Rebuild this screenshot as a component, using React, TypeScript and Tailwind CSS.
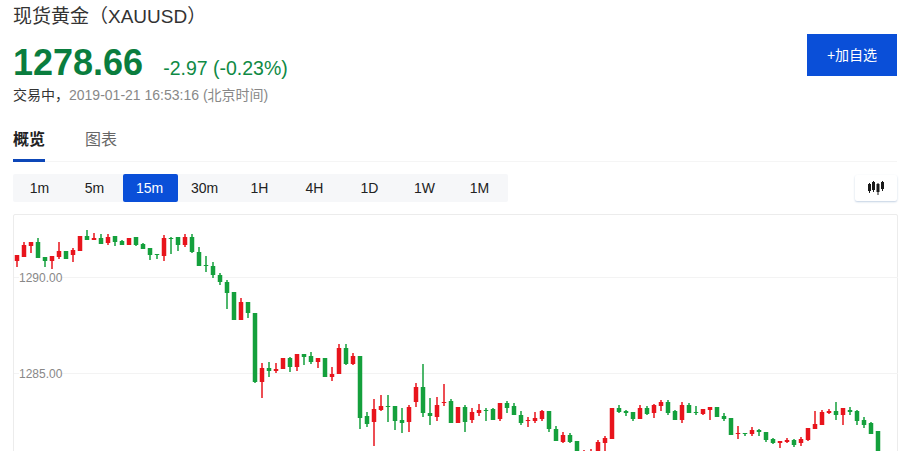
const intervals = ["1m", "5m", "15m", "30m", "1H", "4H", "1D", "1W", "1M"];

// r = red, g = green: [colour, wick top, body top, body bottom, wick bottom], one candle every 7px from x=17
type Candle = ["r" | "g", number, number, number, number];

const candles: Candle[] = [
  ["r", 255, 255, 261, 267], ["r", 242, 245, 257, 257], ["r", 242, 242, 246, 253], ["g", 238, 242, 258, 258],
  ["g", 257, 257, 261, 267], ["r", 256, 256, 261, 269], ["r", 242, 251, 257, 259], ["g", 251, 251, 259, 259],
  ["r", 248, 250, 255, 262], ["r", 236, 236, 251, 251], ["g", 230, 236, 240, 240], ["r", 233, 238, 240, 240],
  ["g", 234, 238, 244, 244], ["r", 234, 237, 243, 245], ["g", 236, 236, 242, 246], ["g", 240, 241, 245, 245],
  ["r", 238, 238, 245, 245], ["g", 237, 237, 245, 246], ["g", 243, 244, 249, 249], ["g", 248, 248, 255, 260],
  ["g", 254, 254, 255, 259], ["r", 235, 238, 256, 261], ["g", 237, 238, 239, 254], ["g", 237, 237, 245, 251],
  ["r", 234, 237, 245, 247], ["g", 234, 237, 252, 253], ["g", 247, 252, 266, 266], ["g", 256, 265, 266, 272],
  ["g", 262, 266, 275, 278], ["g", 273, 275, 282, 285], ["g", 280, 282, 293, 309], ["g", 292, 292, 320, 320],
  ["r", 298, 302, 320, 320], ["g", 302, 302, 313, 318], ["g", 313, 313, 382, 383], ["r", 363, 368, 382, 398],
  ["g", 362, 368, 371, 377], ["r", 363, 369, 371, 373], ["r", 358, 358, 369, 369], ["g", 357, 358, 367, 372],
  ["r", 354, 354, 367, 371], ["g", 354, 354, 357, 365], ["g", 352, 356, 362, 364], ["r", 358, 358, 362, 368],
  ["g", 358, 358, 377, 377], ["r", 367, 374, 377, 381], ["r", 344, 348, 374, 374], ["g", 344, 348, 364, 365],
  ["r", 353, 356, 364, 365], ["g", 356, 356, 418, 429], ["g", 412, 416, 424, 427], ["r", 399, 409, 422, 446],
  ["r", 395, 406, 410, 411], ["g", 395, 406, 407, 422], ["g", 406, 406, 421, 430], ["g", 408, 420, 423, 433],
  ["r", 405, 407, 422, 432], ["r", 383, 387, 402, 407], ["g", 364, 387, 413, 417], ["g", 398, 413, 416, 425],
  ["r", 397, 405, 417, 421], ["r", 384, 402, 403, 406], ["g", 399, 401, 423, 423], ["r", 407, 407, 423, 423],
  ["g", 405, 407, 422, 432], ["r", 408, 412, 420, 423], ["r", 404, 410, 413, 416], ["g", 408, 410, 411, 421],
  ["g", 408, 409, 420, 420], ["r", 403, 403, 419, 421], ["g", 401, 403, 408, 413], ["g", 403, 406, 415, 415],
  ["g", 411, 415, 423, 425], ["r", 417, 420, 421, 427], ["r", 412, 418, 421, 423], ["r", 410, 411, 419, 421],
  ["g", 411, 411, 429, 432], ["g", 426, 429, 441, 441], ["r", 432, 435, 442, 443], ["g", 433, 435, 442, 443],
  ["g", 441, 441, 455, 455], ["r", 450, 452, 455, 455], ["r", 449, 451, 455, 455], ["r", 440, 442, 455, 455],
  ["r", 436, 438, 443, 451], ["r", 408, 408, 439, 439], ["g", 405, 408, 412, 413], ["g", 410, 411, 413, 416],
  ["g", 412, 412, 419, 421], ["r", 405, 408, 419, 419], ["g", 406, 408, 414, 415], ["r", 404, 405, 413, 418],
  ["r", 400, 402, 406, 411], ["g", 400, 402, 413, 415], ["g", 410, 411, 420, 420], ["r", 402, 405, 420, 423],
  ["g", 403, 405, 413, 413], ["g", 406, 412, 413, 415], ["r", 409, 409, 414, 415], ["r", 407, 407, 410, 420],
  ["g", 407, 407, 417, 417], ["g", 413, 416, 419, 421], ["g", 418, 418, 435, 435], ["r", 426, 433, 434, 439],
  ["g", 433, 433, 434, 436], ["r", 427, 430, 434, 436], ["g", 429, 430, 432, 436], ["g", 432, 432, 440, 442],
  ["g", 438, 439, 443, 444], ["r", 441, 441, 443, 448], ["r", 438, 440, 442, 443], ["g", 439, 440, 445, 447],
  ["r", 437, 439, 443, 446], ["r", 428, 428, 440, 441], ["r", 411, 424, 429, 429], ["r", 410, 412, 425, 425],
  ["r", 409, 411, 413, 414], ["g", 402, 411, 415, 420], ["r", 408, 408, 415, 425], ["g", 407, 410, 412, 415],
  ["g", 410, 411, 421, 425], ["g", 417, 420, 425, 428], ["g", 422, 423, 434, 434], ["g", 431, 431, 455, 455],
];

export default function App() {
  return (
    <div className="h-[451px] w-[920px] overflow-hidden bg-white pl-[13px] pr-[23px] font-['Liberation_Sans','Noto_Sans_CJK_SC',sans-serif] text-[#333]">
      <div className="flex items-start justify-between">
        <div>
          <h1 className="mt-[5px] h-[24px] text-[19px] leading-[24px] text-[#333]">现货黄金（XAUUSD）</h1>
          <div className="mt-[12px] flex items-baseline">
            <span className="text-[36px] leading-[44px] font-bold text-[#0a7d3e]">1278.66</span>
            <span className="ml-[20px] text-[19.5px] text-[#0f8a45]">-2.97 (-0.23%)</span>
          </div>
          <p className="mt-[1px] text-[14px] leading-[18px] text-[#333]">
            交易中，<span className="text-[#888]">2019-01-21 16:53:16 (北京时间)</span>
          </p>
        </div>
        <button className="mt-[34px] h-[42px] w-[90px] bg-[#0a4fd8] text-[14px] text-white">+加自选</button>
      </div>

      <div className="mt-[20px] flex h-[38px] items-start gap-[40px] border-b border-[#f5f5f5] text-[16px] leading-[22px]">
        <div className="h-[38px] w-[32px] border-b-[3px] border-[#0d47b8] pt-[5px] font-bold text-[#222]">概览</div>
        <div className="pt-[5px] text-[#666]">图表</div>
      </div>

      <div className="mt-[12px] flex items-center justify-between">
        <div className="flex h-[28px] rounded-[2px] bg-[#f6f7f9]">
          {intervals.map((label) => (
            <div
              key={label}
              className={
                label === "15m"
                  ? "flex w-[55px] items-center justify-center rounded-[2px] bg-[#0a4fd8] pr-[2px] text-[14px] text-white"
                  : "flex w-[55px] items-center justify-center pr-[2px] text-[14px] text-[#222]"
              }
            >
              {label}
            </div>
          ))}
        </div>
        <div className="flex h-[26px] w-[42px] items-center justify-center rounded-[2px] bg-white shadow-[0_1px_2px_rgba(120,150,190,0.45)]">
          <svg width="16" height="14" viewBox="0 0 16 14">
            <g fill="#1a1a1a">
              <rect x="0" y="3" width="3" height="7" />
              <rect x="1" y="2" width="1" height="10" />
              <rect x="4" y="1" width="3" height="8" />
              <rect x="5" y="0" width="1" height="11" />
              <rect x="8.5" y="3" width="3" height="8" />
              <rect x="9.5" y="2" width="1" height="12" />
              <rect x="13" y="1" width="3" height="7" />
              <rect x="14" y="0" width="1" height="10" />
            </g>
          </svg>
        </div>
      </div>

      <div className="relative mt-[12px] -mr-[1px] h-[260px] rounded-t-[2px] border border-[#ececec]">
        <svg className="block" width="884" height="259" viewBox="14 215 884 259">
          <line x1="14" x2="898" y1="277.5" y2="277.5" stroke="#f3f3f3" />
          <line x1="14" x2="898" y1="373.5" y2="373.5" stroke="#f3f3f3" />
          {candles.map(([color, wickTop, bodyTop, bodyBottom, wickBottom], i) => {
            const x = 17 + i * 7;
            const fill = color === "r" ? "#e8141c" : "#14a03c";
            return (
              <g key={i} fill={fill}>
                <rect x={x - 0.75} y={wickTop} width={1.5} height={wickBottom - wickTop} />
                <rect x={x - 2.25} y={bodyTop} width={4.5} height={Math.max(bodyBottom - bodyTop, 1)} />
              </g>
            );
          })}
        </svg>
        <span className="absolute top-[55px] left-[5px] bg-white text-[12px] leading-[16px] text-[#888]">1290.00</span>
        <span className="absolute top-[151px] left-[5px] bg-white text-[12px] leading-[16px] text-[#888]">1285.00</span>
      </div>
    </div>
  );
}
